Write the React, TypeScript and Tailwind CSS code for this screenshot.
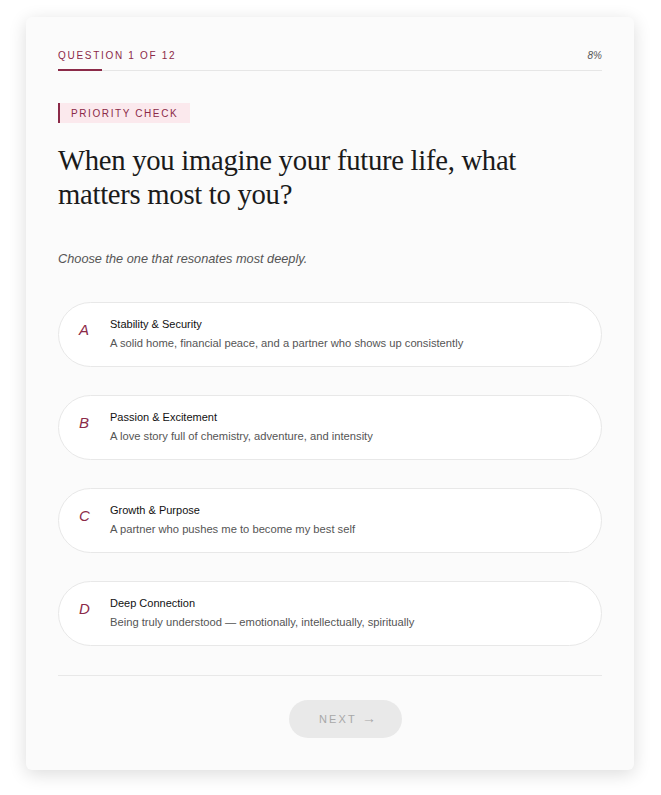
import React from 'react';

const options = [
  { key: 'A', title: 'Stability & Security', desc: 'A solid home, financial peace, and a partner who shows up consistently' },
  { key: 'B', title: 'Passion & Excitement', desc: 'A love story full of chemistry, adventure, and intensity' },
  { key: 'C', title: 'Growth & Purpose', desc: 'A partner who pushes me to become my best self' },
  { key: 'D', title: 'Deep Connection', desc: 'Being truly understood — emotionally, intellectually, spiritually' },
];

export default function App() {
  return (
    <div className="min-h-screen bg-white px-[26px] pt-[17px] pb-6 font-['Liberation_Sans',Arial,sans-serif]">
      <div className="w-[608px] bg-[#fbfbfb] rounded-md shadow-[0_4px_18px_rgba(0,0,0,0.14)] px-8 pt-[31px] pb-8">
        {/* Progress */}
        <div className="flex items-center justify-between">
          <span className="text-[10px] tracking-[0.17em] text-[#8b2a48]">QUESTION 1 OF 12</span>
          <span className="text-[10px] italic text-[#555]">8%</span>
        </div>
        <div className="mt-[7px] h-px bg-[#e6e6e6] relative">
          <div className="absolute left-0 -top-px h-[2px] w-[8%] bg-[#8b2a48]" />
        </div>

        {/* Tag */}
        <div className="mt-[32px] inline-flex items-center h-[20px] border-l-2 border-[#8b2a48] bg-[#fbe9ed] pl-[11px] pr-[12px]">
          <span className="text-[10px] tracking-[0.16em] text-[#8b2a48]">PRIORITY CHECK</span>
        </div>

        <h1 className="mt-[19px] font-['Liberation_Serif','Times_New_Roman',serif] text-[28.7px] leading-[34px] text-[#1a1a1a] tracking-[-0.01em]">
          When you imagine your future life, what
          <br />
          matters most to you?
        </h1>

        <p className="mt-[38px] text-[12.75px] italic text-[#555]">Choose the one that resonates most deeply.</p>

        {/* Options */}
        <div className="mt-[34px] flex flex-col gap-[28px]">
          {options.map((o) => (
            <button
              key={o.key}
              className="flex items-center h-[65px] w-full rounded-full border border-[#e8e8e8] bg-white pl-[20px] pr-6 text-left"
            >
              <span className="relative -top-[4px] w-[31px] text-[15px] italic text-[#8b2a48]">{o.key}</span>
              <span className="relative -top-[1px] flex flex-col">
                <span className="text-[11px] text-[#111] leading-[14px]">{o.title}</span>
                <span className="mt-[5px] text-[11.2px] text-[#555] leading-[14px]">{o.desc}</span>
              </span>
            </button>
          ))}
        </div>

        <div className="mt-[29px] h-px bg-[#e8e8e8]" />

        <div className="mt-[24px] flex">
          <button className="ml-[231px] h-[38px] w-[113px] rounded-full bg-[#e9e9e9] pl-[4px] text-[11px] tracking-[0.2em] text-[#a8a8a8]">
            NEXT <span className="text-[14px] tracking-normal">→</span>
          </button>
        </div>
      </div>
    </div>
  );
}
